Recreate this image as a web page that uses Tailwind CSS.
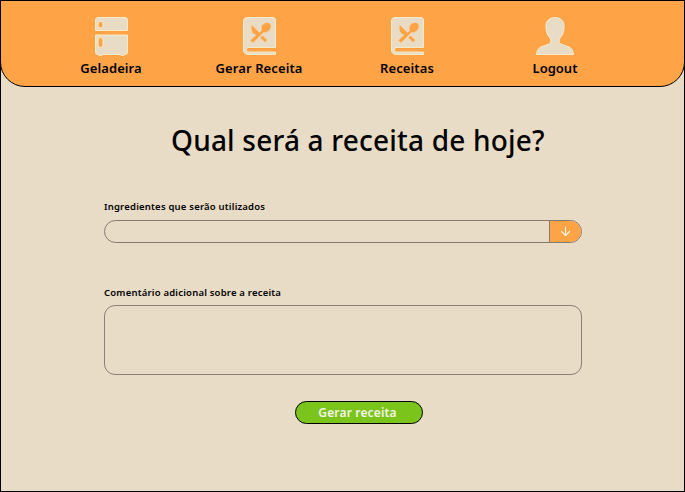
<!DOCTYPE html>
<html lang="pt-BR">
<head>
<meta charset="UTF-8">
<title>Gerar receita</title>
<script src="https://cdn.jsdelivr.net/npm/@tailwindcss/browser@4"></script>
</head>
<body class="w-[685px] h-[492px] overflow-hidden bg-black font-['Noto_Sans',sans-serif] font-medium text-black">
<div class="w-full h-full p-px">
<div class="w-full h-full bg-[#e8dcc6] flex flex-col">
  <header class="-mx-px -mt-px h-[87px] shrink-0 border border-black rounded-b-[25px] bg-[#ffa347] px-9 pt-[15px]">
    <nav class="grid grid-cols-[repeat(4,148px)] text-[13px] font-semibold leading-[18px]">
      <a class="flex flex-col items-center gap-[3px]">
        <svg class="w-10 h-10" viewBox="0 0 40 40" fill="#e8dcc6" stroke="#f5ebc8" stroke-width="1">
          <path d="M6.500 1.500H34Q36.500 1.500 36.500 4V14.500H4.500V4Q4.500 1.500 6.500 1.500Z"/>
          <path d="M4.500 19H36.500V36.500Q36.500 38.500 34 38.500H33.500L32.500 40H30.500L29.500 38.500H11.500L10.500 40H8.500L7.500 38.500H7Q4.500 38.500 4.500 36.500Z"/>
          <rect x="7" y="5.500" width="5" height="6.500" rx="2.500" fill="#ffa347"/>
          <rect x="7" y="21.500" width="5" height="10" rx="2.500" fill="#ffa347"/>
        </svg>
        <span class="tracking-[0.1px]">Geladeira</span>
      </a>
      <a class="flex flex-col items-center gap-[3px]">
        <svg class="w-10 h-10" viewBox="0 0 40 40">
          <path d="M8 1.500H34Q36.500 1.500 36.500 4V31.500H9Q7.500 31.700 7.500 34T9 36H36.500V38.500H9Q4.500 38 4.500 34V5Q4.500 1.500 8 1.500Z" fill="#e8dcc6" stroke="#f5ebc8"/>
          <path d="M12.500 8.500L20.500 16.500L22.500 14.500C21 10 24.500 6.500 28.500 6.500C32.500 7 33 11.500 30.500 14C28.500 16.500 26.500 17 24.500 16.500L14 27L11 24.500L17 19C13 17.500 11.500 14.500 12.500 8.500ZM21 21.500L23.500 19.500L28.500 24L26 26.500Z" fill="#ffa347" stroke="#f5e2bc" stroke-width=".4"/>
        </svg>
        <span class="tracking-[0.1px]">Gerar Receita</span>
      </a>
      <a class="flex flex-col items-center gap-[3px]">
        <svg class="w-10 h-10" viewBox="0 0 40 40">
          <path d="M8 1.500H34Q36.500 1.500 36.500 4V31.500H9Q7.500 31.700 7.500 34T9 36H36.500V38.500H9Q4.500 38 4.500 34V5Q4.500 1.500 8 1.500Z" fill="#e8dcc6" stroke="#f5ebc8"/>
          <path d="M12.500 8.500L20.500 16.500L22.500 14.500C21 10 24.500 6.500 28.500 6.500C32.500 7 33 11.500 30.500 14C28.500 16.500 26.500 17 24.500 16.500L14 27L11 24.500L17 19C13 17.500 11.500 14.500 12.500 8.500ZM21 21.500L23.500 19.500L28.500 24L26 26.500Z" fill="#ffa347" stroke="#f5e2bc" stroke-width=".4"/>
        </svg>
        <span class="tracking-[0.1px]">Receitas</span>
      </a>
      <a class="flex flex-col items-center gap-[3px]">
        <svg class="w-10 h-10" viewBox="0 0 40 40">
          <path d="M20 1.500C26 1.500 29.500 5.500 29 11C29 17 27 20 25 22C23.500 25 24 27 27 28.500L33 30.500Q38 32 38.500 38.500H1.500Q2 32 7 30.500L13 28.500C16 27 16.500 25 15 22C13 20 11 17 11 11C10.500 5.500 14 1.500 20 1.500Z" fill="#e8dcc6" stroke="#f5ebc8"/>
        </svg>
        <span>Logout</span>
      </a>
    </nav>
  </header>

  <main class="ml-[103px] w-[478px]">
    <h1 class="pt-[33px] pl-[67px] h-[114px] text-[28px] leading-10 whitespace-nowrap tracking-[0.2px]">Qual será a receita de hoje?</h1>
    <label class="block h-[19px] text-[9.5px] font-semibold leading-3 tracking-[0.2px]">Ingredientes que serão utilizados</label>
    <div class="flex h-[23px] border border-[#857a70] rounded-full overflow-hidden">
      <div class="flex-1"></div>
      <button class="w-8 border-l border-[#857a70] bg-[#ffa347] flex items-center justify-center">
        <svg class="w-[11px] h-[11px]" viewBox="0 0 11 11" fill="none" stroke="#fff5e6" stroke-width="1.100" stroke-linecap="round" stroke-linejoin="round"><path d="M5.500 1V9.500M1.500 5.500L5.500 9.500L9.500 5.500"/></svg>
      </button>
    </div>
    <label class="block mt-11 h-[18px] text-[9.5px] font-semibold leading-3 tracking-[0.2px]">Comentário adicional sobre a receita</label>
    <div class="h-[70px] border border-[#8a8074] rounded-[11px]"></div>
    <button class="block mt-[26px] ml-[191px] w-32 h-[23px] rounded-full border border-black bg-[#7bc41c] text-[#f7f4e8] text-xs leading-[21px] font-semibold tracking-[0.15px] pr-[3px]">Gerar receita</button>
  </main>
</div>
</div>
</body>
</html>
